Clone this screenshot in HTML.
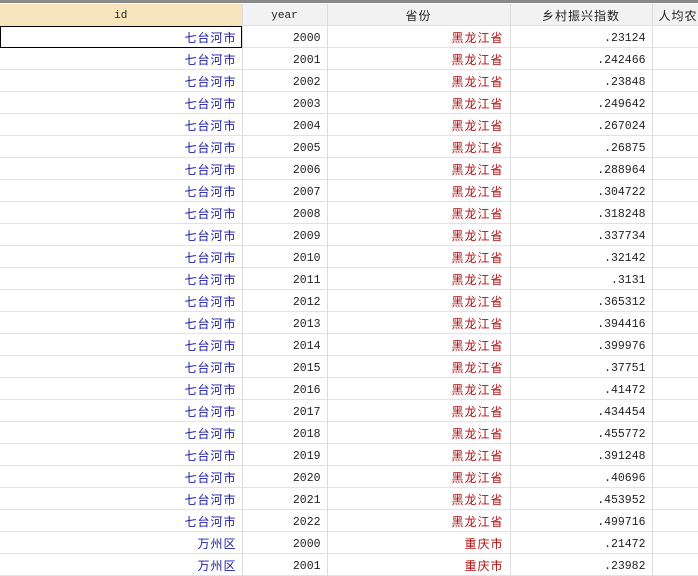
<!DOCTYPE html><html><head><meta charset="utf-8"><style>
body{margin:0;width:698px;height:574px;overflow:hidden;background:#fff;font-family:"Liberation Sans","Noto Sans CJK SC",sans-serif}
.top{position:absolute;left:0;top:0;width:698px;height:3px;background:#8a8a8a}
table{position:absolute;left:0;top:4px;border-collapse:collapse;table-layout:fixed;width:720px}
td,th{vertical-align:top;padding:4px 6px 0 6px;height:17px;line-height:17px;border-right:1px solid #dcdcdc;border-bottom:1px solid #e2e2e2;font-size:12px;white-space:nowrap;overflow:hidden}
th{font-weight:normal;background:#f2f2f2;color:#222;text-align:center;letter-spacing:1px}
th.m{font-family:"Liberation Mono",monospace;font-size:11px;letter-spacing:0}
th.sel{background:#f8e4bd}
td{text-align:right}
.b{color:#1a1aa8;letter-spacing:1px;padding-right:5px}.r{color:#b01010;letter-spacing:1px;padding-right:6px}
td.n{font-family:"Liberation Mono",monospace;font-size:11.5px;color:#222}
tr.f td.b{outline:1px solid #000;outline-offset:-1px}
</style></head><body><div class="top"></div>
<table><colgroup><col style="width:242px"><col style="width:85px"><col style="width:183px"><col style="width:142px"><col style="width:68px"></colgroup>
<tr><th class="m sel">id</th><th class="m">year</th><th>省份</th><th>乡村振兴指数</th><th style="text-align:left">人均农</th></tr>
<tr class="f"><td class="b">七台河市</td><td class="n">2000</td><td class="r">黑龙江省</td><td class="n">.23124</td><td></td></tr>
<tr><td class="b">七台河市</td><td class="n">2001</td><td class="r">黑龙江省</td><td class="n">.242466</td><td></td></tr>
<tr><td class="b">七台河市</td><td class="n">2002</td><td class="r">黑龙江省</td><td class="n">.23848</td><td></td></tr>
<tr><td class="b">七台河市</td><td class="n">2003</td><td class="r">黑龙江省</td><td class="n">.249642</td><td></td></tr>
<tr><td class="b">七台河市</td><td class="n">2004</td><td class="r">黑龙江省</td><td class="n">.267024</td><td></td></tr>
<tr><td class="b">七台河市</td><td class="n">2005</td><td class="r">黑龙江省</td><td class="n">.26875</td><td></td></tr>
<tr><td class="b">七台河市</td><td class="n">2006</td><td class="r">黑龙江省</td><td class="n">.288964</td><td></td></tr>
<tr><td class="b">七台河市</td><td class="n">2007</td><td class="r">黑龙江省</td><td class="n">.304722</td><td></td></tr>
<tr><td class="b">七台河市</td><td class="n">2008</td><td class="r">黑龙江省</td><td class="n">.318248</td><td></td></tr>
<tr><td class="b">七台河市</td><td class="n">2009</td><td class="r">黑龙江省</td><td class="n">.337734</td><td></td></tr>
<tr><td class="b">七台河市</td><td class="n">2010</td><td class="r">黑龙江省</td><td class="n">.32142</td><td></td></tr>
<tr><td class="b">七台河市</td><td class="n">2011</td><td class="r">黑龙江省</td><td class="n">.3131</td><td></td></tr>
<tr><td class="b">七台河市</td><td class="n">2012</td><td class="r">黑龙江省</td><td class="n">.365312</td><td></td></tr>
<tr><td class="b">七台河市</td><td class="n">2013</td><td class="r">黑龙江省</td><td class="n">.394416</td><td></td></tr>
<tr><td class="b">七台河市</td><td class="n">2014</td><td class="r">黑龙江省</td><td class="n">.399976</td><td></td></tr>
<tr><td class="b">七台河市</td><td class="n">2015</td><td class="r">黑龙江省</td><td class="n">.37751</td><td></td></tr>
<tr><td class="b">七台河市</td><td class="n">2016</td><td class="r">黑龙江省</td><td class="n">.41472</td><td></td></tr>
<tr><td class="b">七台河市</td><td class="n">2017</td><td class="r">黑龙江省</td><td class="n">.434454</td><td></td></tr>
<tr><td class="b">七台河市</td><td class="n">2018</td><td class="r">黑龙江省</td><td class="n">.455772</td><td></td></tr>
<tr><td class="b">七台河市</td><td class="n">2019</td><td class="r">黑龙江省</td><td class="n">.391248</td><td></td></tr>
<tr><td class="b">七台河市</td><td class="n">2020</td><td class="r">黑龙江省</td><td class="n">.40696</td><td></td></tr>
<tr><td class="b">七台河市</td><td class="n">2021</td><td class="r">黑龙江省</td><td class="n">.453952</td><td></td></tr>
<tr><td class="b">七台河市</td><td class="n">2022</td><td class="r">黑龙江省</td><td class="n">.499716</td><td></td></tr>
<tr><td class="b">万州区</td><td class="n">2000</td><td class="r">重庆市</td><td class="n">.21472</td><td></td></tr>
<tr><td class="b">万州区</td><td class="n">2001</td><td class="r">重庆市</td><td class="n">.23982</td><td></td></tr>
</table></body></html>
